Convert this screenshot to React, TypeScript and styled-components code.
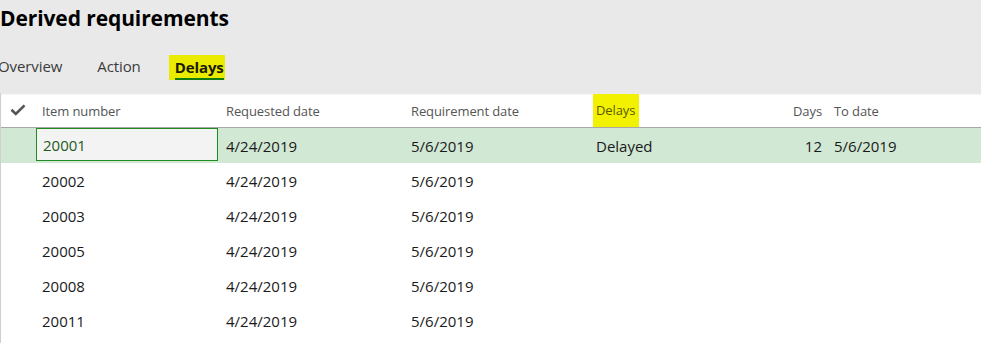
import React from 'react';
import styled, { createGlobalStyle } from 'styled-components';

interface RowData {
  item: string;
  requested: string;
  requirement: string;
  delay?: string;
  days?: string;
  toDate?: string;
}

const rows: RowData[] = [
  { item: '20001', requested: '4/24/2019', requirement: '5/6/2019', delay: 'Delayed', days: '12', toDate: '5/6/2019' },
  { item: '20002', requested: '4/24/2019', requirement: '5/6/2019' },
  { item: '20003', requested: '4/24/2019', requirement: '5/6/2019' },
  { item: '20005', requested: '4/24/2019', requirement: '5/6/2019' },
  { item: '20008', requested: '4/24/2019', requirement: '5/6/2019' },
  { item: '20011', requested: '4/24/2019', requirement: '5/6/2019' },
];

const App: React.FC = () => {
  return (
    <Page>
      <GlobalStyle />
      <Header>
        <Title>Derived requirements</Title>
        <Tabs>
          <Tab>Overview</Tab>
          <Tab>Action</Tab>
          <Marker>
            <Tab $active>Delays</Tab>
          </Marker>
        </Tabs>
      </Header>
      <Grid>
        <HeaderRow>
          <CheckCell>
            <svg width="16" height="12" viewBox="0 0 16 12">
              <polyline points="1.5,5.8 5.8,10 14.5,1.3" fill="none" stroke="#555" strokeWidth="2.6" />
            </svg>
          </CheckCell>
          <HeadCell>Item number</HeadCell>
          <HeadCell>Requested date</HeadCell>
          <HeadCell>Requirement date</HeadCell>
          <HeadCell>
            <HeadMarker>Delays</HeadMarker>
          </HeadCell>
          <HeadCell $right>Days</HeadCell>
          <HeadCell>To date</HeadCell>
        </HeaderRow>
        {rows.map((row, index) => (
          <Row key={row.item} $selected={index === 0}>
            <CheckCell />
            {index === 0 ? (
              <InputCell>
                <ItemInput>{row.item}</ItemInput>
              </InputCell>
            ) : (
              <Cell>{row.item}</Cell>
            )}
            <Cell>{row.requested}</Cell>
            <Cell>{row.requirement}</Cell>
            <Cell>{row.delay}</Cell>
            <Cell $right>{row.days}</Cell>
            <Cell>{row.toDate}</Cell>
          </Row>
        ))}
      </Grid>
    </Page>
  );
};

// Styled components
const GlobalStyle = createGlobalStyle`
  html, body {
    margin: 0;
    padding: 0;
    background: #ffffff;
    font-family: "Open Sans", "Noto Sans", sans-serif;
    overflow: hidden;
  }
`;

const Page = styled.div`
  width: 981px;
  height: 343px;
  display: flex;
  flex-direction: column;
  overflow: hidden;
`;

const Header = styled.div`
  background-color: #e9e9e9;
  height: 93px;
  padding-top: 4px;
  box-sizing: border-box;
`;

const Title = styled.h1`
  margin: 0;
  font-size: 21px;
  font-weight: 700;
  line-height: 28px;
  color: #000;
  letter-spacing: -0.1px;
`;

const Tabs = styled.div`
  display: flex;
  align-items: center;
  gap: 35px;
  margin: 23px 0 0 -2px;
  height: 25px;
`;

const Tab = styled.span<{ $active?: boolean }>`
  font-size: 15px;
  line-height: 20px;
  color: ${(p) => (p.$active ? '#1a1a00' : '#3b3b3b')};
  font-weight: ${(p) => (p.$active ? 700 : 400)};
  letter-spacing: -0.1px;
  border-bottom: 2px solid ${(p) => (p.$active ? '#107c10' : 'transparent')};
  padding-bottom: 1px;
`;

const Marker = styled.span`
  background-color: #ebeb00;
  padding: 2px 1px 0 6px;
  margin-left: -7px;
  display: flex;
`;

const Grid = styled.div`
  flex: 1;
  background: #fff;
  border-left: 1px solid #cfcfcf;
  box-shadow: inset 0 2px 2px -1px rgba(0, 0, 0, 0.12);
`;

const columns = '35px 184px 185px 185px 178px 60px 1fr';

const HeaderRow = styled.div`
  display: grid;
  grid-template-columns: ${columns};
  height: 34px;
  align-items: center;
  border-bottom: 1px solid #a8a8a8;
`;

const CheckCell = styled.div`
  display: flex;
  justify-content: flex-start;
  align-items: center;
  padding-left: 9px;
`;

const HeadCell = styled.div<{ $right?: boolean }>`
  font-size: 13px;
  color: #555;
  padding: 1px 6px 0;
  text-align: ${(p) => (p.$right ? 'right' : 'left')};
  white-space: nowrap;
  letter-spacing: -0.1px;
`;

const HeadMarker = styled.span`
  background-color: #f2f200;
  color: #5a5a00;
  display: inline-block;
  padding: 7px 4px 8px 3px;
  margin-left: -3px;
`;

const Row = styled.div<{ $selected?: boolean }>`
  display: grid;
  grid-template-columns: ${columns};
  height: 35px;
  align-items: center;
  background-color: ${(p) => (p.$selected ? '#d1e8d5' : '#fff')};
`;

const Cell = styled.div<{ $right?: boolean }>`
  font-size: 15px;
  color: #1a1a1a;
  padding: 0 6px;
  text-align: ${(p) => (p.$right ? 'right' : 'left')};
  white-space: nowrap;
`;

const InputCell = styled.div`
  height: 100%;
  padding: 0 2px 2px 0;
  box-sizing: border-box;
`;

const ItemInput = styled.div`
  height: 100%;
  box-sizing: border-box;
  border: 1px solid #1e8c1e;
  background-color: #f3f3f3;
  font-size: 15px;
  color: #1c5a1c;
  padding-left: 6px;
  display: flex;
  align-items: center;
`;

export default App;
